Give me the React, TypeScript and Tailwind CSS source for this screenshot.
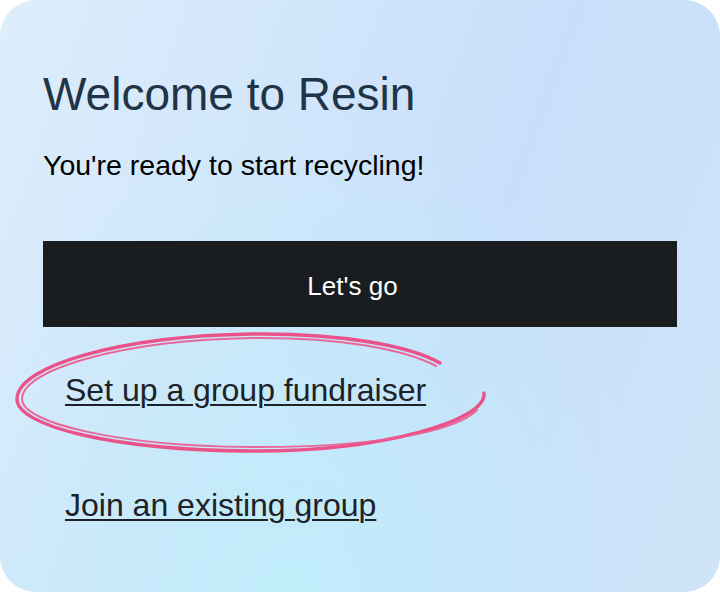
import React from 'react';

const font = { fontFamily: '"Liberation Sans", Arial, Helvetica, sans-serif' };

const Scribble: React.FC = () => (
  <svg
    className="pointer-events-none absolute inset-0"
    width={720}
    height={592}
    viewBox="0 0 720 592"
    fill="none"
  >
    <path
      d="M484 393 C487 421 380 452 250 451 C112 450 17 426 17 399 C17 366 120 336 252 334 C342 333 410 346 440 363"
      stroke="#ea5289"
      strokeWidth={3.4}
      strokeLinecap="round"
    />
    <path
      d="M477 410 C455 432 370 448 250 447 C118 446 22 423 22 399 C22 369 124 340 252 338 C338 337 404 349 436 366"
      stroke="#ec5a8f"
      strokeWidth={2}
      strokeLinecap="round"
      opacity={0.9}
    />
  </svg>
);

export default function App() {
  return (
    <div className="w-[720px] h-[592px] bg-white" style={font}>
      <div className="relative w-full h-full rounded-[36px] overflow-hidden bg-[radial-gradient(ellipse_at_40%_105%,#c0edfa_0%,rgba(193,237,250,0)_60%),linear-gradient(110deg,#ddeefb_0%,#c8dffb_62%,#cfe4f7_100%)]">
        <div className="flex flex-col px-[43px] pt-[71px]">
          <h1 className="text-[46px] leading-none text-[#1f3447]">Welcome to Resin</h1>
          <p className="mt-[34px] text-[28.5px] leading-none text-black">You're ready to start recycling!</p>
          <button className="mt-[61px] h-[86px] w-full bg-[#191d20] text-white text-[26px] flex items-center justify-center pt-[5px] pr-[15px]">
            Let's go
          </button>
          <a href="#" className="mt-[47px] ml-[22px] self-start text-[32px] leading-none text-[#1c2226] underline decoration-[2px] underline-offset-[3px]">
            Set up a group fundraiser
          </a>
          <a href="#" className="mt-[83px] ml-[22px] self-start text-[32px] leading-none text-[#1c2226] underline decoration-[2px] underline-offset-[3px]">
            Join an existing group
          </a>
        </div>
        <Scribble />
      </div>
    </div>
  );
}
